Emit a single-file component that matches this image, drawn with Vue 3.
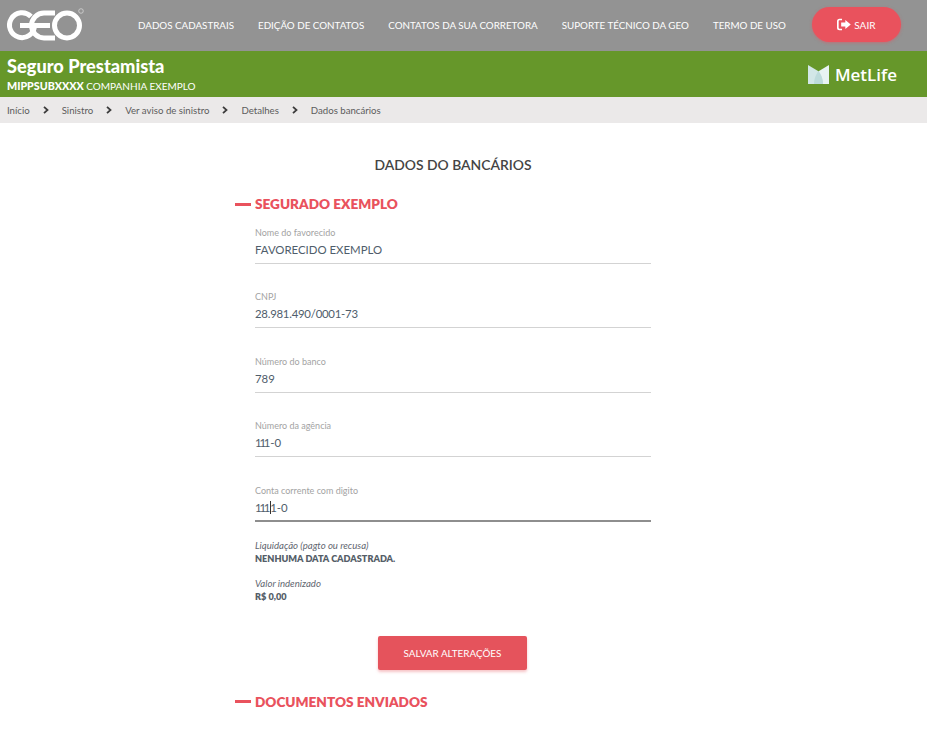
<script setup>
const menu = [
  'DADOS CADASTRAIS',
  'EDIÇÃO DE CONTATOS',
  'CONTATOS DA SUA CORRETORA',
  'SUPORTE TÉCNICO DA GEO',
  'TERMO DE USO',
];

const crumbs = ['Início', 'Sinistro', 'Ver aviso de sinistro', 'Detalhes', 'Dados bancários'];

const fields = [
  { label: 'Nome do favorecido', value: 'FAVORECIDO EXEMPLO' },
  { label: 'CNPJ', value: '28.981.490/0001-73', kind: 'tight' },
  { label: 'Número do banco', value: '789' },
  { label: 'Número da agência', ones: '111', value: '-0' },
];
</script>

<template>
  <div class="page">
    <header class="topbar">
      <svg class="geo-logo" viewBox="5 5 84 41" width="84" height="41" fill="none" stroke="#fff" stroke-width="5">
        <path d="M31 16.500A12.500 12.500 0 1 0 34.500 25.500H20" />
        <path d="M55 13H44A12.500 12.500 0 0 0 44 38H55" />
        <path d="M32 25.500H50" />
        <circle cx="67" cy="25.500" r="12.500" />
        <circle cx="81" cy="11" r="2.300" stroke="#ddd" stroke-width="0.7" />
      </svg>
      <nav class="menu">
        <a v-for="item in menu" :key="item">{{ item }}</a>
      </nav>
      <button class="logout">
        <svg viewBox="0 0 18 14" width="15" height="13" fill="#fff">
          <path d="M6 0H3a3 3 0 0 0-3 3v8a3 3 0 0 0 3 3h3v-2H3a1 1 0 0 1-1-1V3a1 1 0 0 1 1-1h3z" />
          <path d="M10 1.500l6.500 5.500-6.500 5.500V9.500H5v-5h5z" />
        </svg>
        SAIR
      </button>
    </header>

    <section class="product">
      <div>
        <h1>Seguro Prestamista</h1>
        <p><strong>MIPPSUBXXXX</strong> COMPANHIA EXEMPLO</p>
      </div>
      <div class="metlife">
        <svg viewBox="0 0 21 19" width="21" height="19">
          <path d="M21 0L11 6C8 9 6 14 6 19H21z" fill="#e8f3f3" />
          <path d="M0 0L10 6C13 9 15 14 15 19H0z" fill="#d2e7e7" />
          <path d="M10.500 6.300C8 9 6 14 6 19H15C15 14 13 9 10.500 6.300z" fill="#bddbdb" />
        </svg>
        <span>MetLife</span>
      </div>
    </section>

    <nav class="breadcrumb">
      <template v-for="(crumb, i) in crumbs" :key="crumb">
        <span>{{ crumb }}</span>
        <svg v-if="i < crumbs.length - 1" viewBox="0 0 6 8" width="6" height="8" fill="none" stroke="#3c3c3c" stroke-width="1.800">
          <path d="M1 .8L4.500 4 1 7.200" />
        </svg>
      </template>
    </nav>

    <main class="content">
      <h2>DADOS DO BANCÁRIOS</h2>

      <h3 class="section-title">SEGURADO EXEMPLO</h3>

      <div class="fields">
        <div v-for="field in fields" :key="field.label" class="field">
          <label>{{ field.label }}</label>
          <div class="value" :class="field.kind"><span v-if="field.ones" class="ones">{{ field.ones }}</span>{{ field.value }}</div>
        </div>
        <div class="field focused">
          <label>Conta corrente com digito</label>
          <div class="value"><span class="ones">111</span><i class="caret"></i><span class="ones">1</span>-0</div>
        </div>
      </div>

      <dl class="info">
        <dt>Liquidação (pagto ou recusa)</dt>
        <dd>NENHUMA DATA CADASTRADA.</dd>
        <dt>Valor indenizado</dt>
        <dd>R$ 0,00</dd>
      </dl>

      <button class="save">SALVAR ALTERAÇÕES</button>

      <h3 class="section-title">DOCUMENTOS ENVIADOS</h3>
    </main>
  </div>
</template>

<style>
html, body {
  background: #fff;
}
</style>

<style scoped>
.page {
  height: 729px;
  overflow: hidden;
  font-family: Lato, "Open Sans", sans-serif;
  color: #495057;
}

.topbar {
  height: 51px;
  background: #939393;
  display: flex;
  align-items: center;
  padding: 0 0 2px 5px;
  box-sizing: border-box;
}

.geo-logo {
  flex: none;
  margin: 2px 49px 0 0;
}

.menu {
  display: flex;
  gap: 24px;
  font-size: 9.800px;
  color: #fff;
  white-space: nowrap;
}

.logout {
  margin-left: 26px;
  width: 89px;
  height: 35px;
  border: 0;
  border-radius: 18px;
  background: #e9525d;
  color: #fff;
  font: inherit;
  font-size: 10px;
  display: flex;
  align-items: center;
  justify-content: center;
  gap: 2px;
  box-shadow: 0 1px 3px rgba(233, 82, 93, 0.5);
}

.product {
  height: 46px;
  background: #66972a;
  color: #fff;
  display: flex;
  justify-content: space-between;
  align-items: center;
  padding: 1px 30px 0 7px;
  box-sizing: border-box;
}

.product h1 {
  margin: 0 0 3px;
  font-size: 18.200px;
  line-height: 20px;
  font-weight: 900;
}

.product p {
  margin: 0;
  font-size: 10px;
  line-height: 13px;
}

.product strong {
  font-size: 10.700px;
  font-weight: 900;
}

.metlife {
  display: flex;
  align-items: center;
  gap: 6px;
  font-family: "Open Sans", sans-serif;
  font-size: 17px;
  font-weight: 600;
}

.breadcrumb {
  height: 26px;
  background: #ebe9e9;
  display: flex;
  align-items: center;
  gap: 13px;
  padding-left: 7px;
  font-size: 9.650px;
  color: #5c5c5c;
  box-sizing: border-box;
}

.content {
  width: 396px;
  margin-left: 235px;
  padding-left: 20px;
}

.content h2 {
  margin: 34px 0 0;
  font-size: 13.900px;
  line-height: 16px;
  font-weight: 600;
  text-align: center;
  color: #444;
}

.section-title {
  margin: 0 0 0 -20px;
  font-size: 13.600px;
  line-height: 16px;
  font-weight: 800;
  color: #e9525d;
  display: flex;
  align-items: center;
  gap: 4px;
}

.section-title::before {
  content: "";
  width: 16px;
  height: 3px;
  background: #e9525d;
}

.content h2 + .section-title {
  margin-top: 23px;
}

.fields {
  margin-top: 15px;
  display: flex;
  flex-direction: column;
  gap: 27.400px;
}

.field label {
  display: block;
  font-size: 9px;
  line-height: 12px;
  color: #a3a3a3;
}

.field .value {
  height: 25px;
  padding-top: 3px;
  box-sizing: border-box;
  font-size: 11.400px;
  line-height: 16px;
  color: #4f5d6b;
  border-bottom: 1px solid #d3d3d3;
}

.field .value.tight {
  letter-spacing: -0.25px;
}

.ones {
  letter-spacing: -2.200px;
  margin-right: 2px;
}

.field.focused .value {
  border-bottom: 2px solid #8e8e8e;
}

.caret {
  display: inline-block;
  width: 1px;
  height: 13px;
  margin-right: -1px;
  background: #333;
  vertical-align: -2px;
}

.info {
  margin: 17px 0 0;
  line-height: 13.500px;
}

.info dt {
  font-size: 9.600px;
  font-style: italic;
  color: #5f6670;
}

.info dd {
  margin: 0 0 11px;
  font-size: 9.150px;
  font-weight: 800;
  color: #555e68;
}

.save {
  display: block;
  margin: 32px 0 0 123px;
  width: 149px;
  height: 34px;
  border: 0;
  border-radius: 2px;
  background: #e5535c;
  color: #fff;
  font: inherit;
  font-size: 9.900px;
  box-shadow: 0 2px 3px rgba(229, 83, 92, 0.35);
}

.save + .section-title {
  margin-top: 24px;
}
</style>
